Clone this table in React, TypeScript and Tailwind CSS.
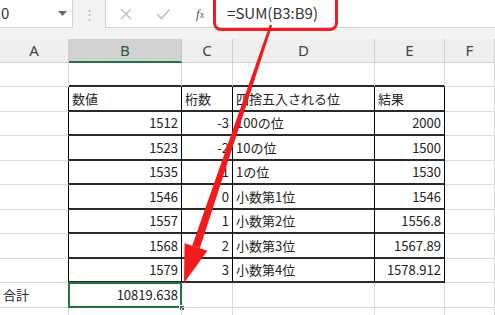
import React from "react";

const FONT = { fontFamily: '"Noto Sans CJK JP", "Noto Sans", sans-serif' };

const colW = ["w-[69px]", "w-[113px]", "w-[51px]", "w-[142px]", "w-[70px]", "flex-1"];

type Row = { cells: string[]; align: ("l" | "r")[] };

const rows: Row[] = [
  { cells: ["", "", "", "", "", ""], align: ["l", "l", "l", "l", "l", "l"] },
  { cells: ["", "数値", "桁数", "四捨五入される位", "結果", ""], align: ["l", "l", "l", "l", "l", "l"] },
  { cells: ["", "1512", "-3", "100の位", "2000", ""], align: ["l", "r", "r", "l", "r", "l"] },
  { cells: ["", "1523", "-2", "10の位", "1500", ""], align: ["l", "r", "r", "l", "r", "l"] },
  { cells: ["", "1535", "-1", "1の位", "1530", ""], align: ["l", "r", "r", "l", "r", "l"] },
  { cells: ["", "1546", "0", "小数第1位", "1546", ""], align: ["l", "r", "r", "l", "r", "l"] },
  { cells: ["", "1557", "1", "小数第2位", "1556.8", ""], align: ["l", "r", "r", "l", "r", "l"] },
  { cells: ["", "1568", "2", "小数第3位", "1567.89", ""], align: ["l", "r", "r", "l", "r", "l"] },
  { cells: ["", "1579", "3", "小数第4位", "1578.912", ""], align: ["l", "r", "r", "l", "r", "l"] },
  { cells: ["合計", "10819.638", "", "", "", ""], align: ["l", "r", "l", "l", "l", "l"] },
  { cells: ["", "", "", "", "", ""], align: ["l", "l", "l", "l", "l", "l"] },
];

// rows 1..8 hold the bordered table, columns 1..4
const inTable = (r: number, c: number) => r >= 1 && r <= 8 && c >= 1 && c <= 4;

function FormulaBar() {
  return (
    <div className="relative flex h-[39px] bg-[#f3f3f3]">
      <div className="flex h-[28px] w-[73px] items-center justify-between border-r border-b border-[#d0d0d0] bg-white pr-[5px]">
        <span className="ml-[1px] text-[15px] text-[#333]" style={FONT}>0</span>
        <svg width="9" height="6" viewBox="0 0 9 6"><path d="M0 0h9L4.5 5z" fill="#666" /></svg>
      </div>
      <div className="flex w-[32px] items-start justify-center pt-[7px] text-[13px] leading-none text-[#b5b5b5]">⋮</div>
      <div className="flex h-[28px] flex-1 items-center border-l border-b border-[#d0d0d0] bg-white">
        <svg className="ml-[13px]" width="14" height="14" viewBox="0 0 14 14">
          <path d="M2 2l10 10M12 2L2 12" stroke="#bdbdbd" strokeWidth="1.4" />
        </svg>
        <svg className="ml-[23px]" width="15" height="14" viewBox="0 0 15 14">
          <path d="M1.5 7.5l4 4L13.5 2.5" stroke="#bdbdbd" strokeWidth="1.6" fill="none" />
        </svg>
        <span className="ml-[25px] text-[13px] italic text-[#555]" style={{ fontFamily: '"Liberation Serif", serif' }}>
          f<span className="text-[10px]">x</span>
        </span>
        <span className="ml-[23px] text-[15px] text-[#333]" style={FONT}>=SUM(B3:B9)</span>
      </div>
      <div className="absolute left-[213px] top-[-10px] h-[41px] w-[125px] rounded-[8px] border-[3px] border-[#ee1c23]" />
    </div>
  );
}

function HeaderRow() {
  const letters = ["A", "B", "C", "D", "E", "F"];
  return (
    <div className="flex h-[23.5px]">
      {letters.map((l, i) => (
        <div
          key={l}
          className={`${colW[i]} flex items-center justify-center text-[15px] ${
            i === 1
              ? "border-b-2 border-r border-b-[#217346] border-r-[#c6c6c6] bg-[#d2d2d2] text-[#1f5a3a]"
              : "border-b border-r border-[#d0d0d0] bg-[#efefef] text-[#444]"
          }`}
          style={{ fontFamily: '"Noto Sans", sans-serif' }}
        >
          {l}
        </div>
      ))}
    </div>
  );
}

export default function App() {
  return (
    <div className="relative h-[315px] w-[495px] overflow-hidden bg-white" style={FONT}>
      <FormulaBar />
      <HeaderRow />
      {rows.map((row, r) => (
        <div key={r} className="flex h-[24.56px]">
          {row.cells.map((t, c) => {
            const rightBlack = inTable(r, c) || (r >= 1 && r <= 8 && c === 0);
            const bottomBlack = r <= 8 && c >= 1 && c <= 4;
            const selected = r === 9 && c === 1;
            return (
              <div
                key={c}
                className={`${colW[c]} relative flex items-center px-[3px] text-[13px] text-[#222] ${
                  rightBlack ? "border-r border-r-[#000]" : "border-r border-r-[#d9d9d9]"
                } ${bottomBlack ? "border-b-2 border-b-[#2a2a2a]" : "border-b border-b-[#d9d9d9]"} ${
                  row.align[c] === "r" ? "justify-end" : "justify-start"
                }`}
              >
                <span className="whitespace-nowrap">{t}</span>
                {selected && (
                  <>
                    <div className="absolute inset-[-1px] border-2 border-[#217346]" />
                    <div className="absolute bottom-[-4px] right-[-4px] h-[6px] w-[6px] border border-white bg-[#217346]" />
                  </>
                )}
              </div>
            );
          })}
        </div>
      ))}
      <svg className="pointer-events-none absolute left-0 top-0" width="495" height="315" viewBox="0 0 495 315">
        <polygon points="269.8,24.6 272.2,25.4 199.8,248.3 192.2,245.7" fill="#f21a1a" />
        <polygon points="184,283 184.6,243.2 207.4,250.8" fill="#f21a1a" />
      </svg>
    </div>
  );
}
